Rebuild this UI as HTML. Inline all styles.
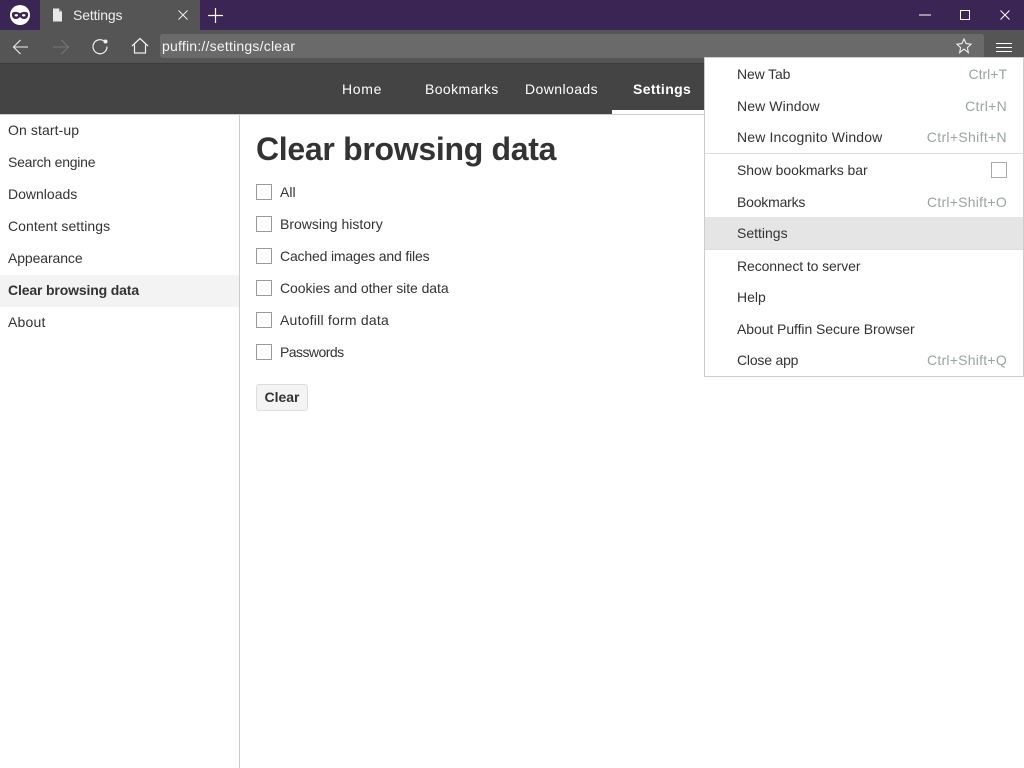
<!DOCTYPE html>
<html><head><meta charset="utf-8"><title>Settings</title>
<style>
html,body{margin:0;padding:0;width:1024px;height:768px;overflow:hidden;background:#fff}
body{position:relative;font-family:"Liberation Sans",sans-serif;font-size:14px;color:#333}
.a{position:absolute;white-space:nowrap}
.t{position:absolute;white-space:nowrap;line-height:20px;height:20px}
.cb{position:absolute;width:14px;height:14px;border:1px solid #999;background:#fff}
.w{color:#fff}
.s{color:#9aa59f;text-align:right;right:17px}
svg{position:absolute;overflow:visible}
</style></head><body>
<div class="a" style="left:0;top:0;width:1024px;height:30px;background:#3a2554"></div>
<div class="a" style="left:40px;top:0;width:160px;height:30px;background:#555"></div>
<div class="a" style="left:0;top:30px;width:1024px;height:34px;background:#555"></div>
<div class="a" style="left:0;top:63px;width:1024px;height:1px;background:#3a3a3a"></div>
<div class="a" style="left:0;top:64px;width:1024px;height:50px;background:#444"></div>
<div class="a" style="left:0;top:114px;width:1024px;height:1px;background:#ccc"></div>
<div class="a" style="left:612px;top:110px;width:92px;height:4px;background:#fff"></div>
<div class="a" style="left:160px;top:34px;width:824px;height:24px;background:#6a6a6a;border-radius:3px"></div>

<svg style="left:0;top:0" width="40" height="30"><circle cx="20" cy="15" r="10" fill="#fff"/><path d="M12 13c2.200-1.500 5.500-1.500 8 .3c2.500-1.800 5.800-1.800 8-.3c.5 3.500-1 6-3.800 6c-2 0-3.200-1-4.200-2c-1 1-2.200 2-4.200 2c-2.800 0-4.300-2.500-3.800-6z" fill="#3a2554"/><ellipse cx="16.300" cy="15.300" rx="1.700" ry="1.200" fill="#fff"/><ellipse cx="23.700" cy="15.300" rx="1.700" ry="1.200" fill="#fff"/></svg>
<svg style="left:52px;top:8px" width="11" height="14"><path d="M1 0.500h6l3 3v10h-9z" fill="#e8e8e8"/><path d="M7 0.500v3h3" fill="#888"/></svg>
<div class="t w" style="left:73px;top:5px;color:#eee;letter-spacing:-.15px">Settings</div>
<svg style="left:178px;top:10px" width="10" height="10"><path d="M.5 .5l9 9M9.500 .5l-9 9" stroke="#eee" stroke-width="1" fill="none"/></svg>
<svg style="left:208px;top:8px" width="15" height="15"><path d="M7.500 0v15M0 7.500h15" stroke="#fff" stroke-width="1.200" fill="none"/></svg>
<svg style="left:919px;top:14px" width="12" height="2"><path d="M0 1h12" stroke="#fff" stroke-width="1"/></svg>
<svg style="left:960px;top:10px" width="10" height="10"><rect x=".5" y=".5" width="9" height="9" fill="none" stroke="#fff"/></svg>
<svg style="left:1000px;top:10px" width="10" height="10"><path d="M.5 .5l9 9M9.500 .5l-9 9" stroke="#fff" stroke-width="1" fill="none"/></svg>

<svg style="left:12px;top:38.500px" width="18" height="16"><path d="M16 8H1.500M8.500 1L1.500 8l7 7" stroke="#eee" stroke-width="1.100" fill="none"/></svg>
<svg style="left:52px;top:38.500px" width="18" height="16"><path d="M1 8h15.500M9.500 1l7 7-7 7" stroke="#767676" stroke-width="1.100" fill="none"/></svg>
<svg style="left:91px;top:38px" width="17" height="16"><path d="M14 3.800A7 7 0 1 0 16 8.500" stroke="#eee" stroke-width="1.200" fill="none"/><circle cx="14.500" cy="3.500" r="2" fill="#eee"/></svg>
<svg style="left:131px;top:37px" width="18" height="17"><path d="M1 9L9 1.500l8 7.500M3.500 7.500V16h11V7.500" stroke="#eee" stroke-width="1.200" fill="none"/></svg>
<div class="t w" style="left:162px;top:36px;color:#f4f4f4;letter-spacing:.22px">puffin://settings/clear</div>
<svg style="left:956px;top:38px" width="16" height="15"><path d="M8 1l2.100 4.600 5 .6-3.700 3.400 1 5L8 11.100 3.600 14.600l1-5L.9 6.200l5-.6z" stroke="#eee" stroke-width="1.100" fill="none"/></svg>
<svg style="left:996px;top:43px" width="16" height="10"><path d="M0 .5h16M0 4.500h16M0 8.500h16" stroke="#fff" stroke-width="1" fill="none"/></svg>

<div class="t w" style="left:342px;top:79px;letter-spacing:.7px">Home</div>
<div class="t w" style="left:425px;top:79px;letter-spacing:.4px">Bookmarks</div>
<div class="t w" style="left:525px;top:79px;letter-spacing:.42px">Downloads</div>
<div class="t w" style="left:633px;top:79px;font-weight:bold;letter-spacing:.37px">Settings</div>

<div class="a" style="left:239px;top:115px;width:1px;height:653px;background:#ccc"></div>
<div class="a" style="left:0;top:275px;width:239px;height:32px;background:#f3f3f3"></div>
<div class="t" style="left:8px;top:120px;letter-spacing:.1px">On start-up</div>
<div class="t" style="left:8px;top:152px;letter-spacing:-.23px">Search engine</div>
<div class="t" style="left:8px;top:184px">Downloads</div>
<div class="t" style="left:8px;top:216px;letter-spacing:.06px">Content settings</div>
<div class="t" style="left:8px;top:248px;letter-spacing:-.1px">Appearance</div>
<div class="t" style="left:8px;top:280px;font-weight:bold;letter-spacing:-.15px">Clear browsing data</div>
<div class="t" style="left:8px;top:312px;letter-spacing:.2px">About</div>

<div class="a" style="left:256px;top:129px;font-size:32px;line-height:40px;font-weight:bold;color:#333;letter-spacing:-.3px">Clear browsing data</div>
<div class="cb" style="left:256px;top:184px"></div><div class="t" style="left:280px;top:182px">All</div>
<div class="cb" style="left:256px;top:216px"></div><div class="t" style="left:280px;top:214px">Browsing history</div>
<div class="cb" style="left:256px;top:248px"></div><div class="t" style="left:280px;top:246px;letter-spacing:-.17px">Cached images and files</div>
<div class="cb" style="left:256px;top:280px"></div><div class="t" style="left:280px;top:278px;letter-spacing:-.07px">Cookies and other site data</div>
<div class="cb" style="left:256px;top:312px"></div><div class="t" style="left:280px;top:310px;letter-spacing:.22px">Autofill form data</div>
<div class="cb" style="left:256px;top:344px"></div><div class="t" style="left:280px;top:342px;letter-spacing:-.55px">Passwords</div>
<div class="a" style="left:256px;top:384px;width:50px;height:25px;border:1px solid #ddd;border-radius:3px;background:#f4f4f4;text-align:center;line-height:25px;font-weight:bold;color:#333">Clear</div>

<div class="a" style="left:704px;top:57px;width:318px;height:318px;border:1px solid #ccc;background:#fff"></div>
<div class="a" style="left:705px;top:153px;width:318px;height:1px;background:#ddd"></div>
<div class="a" style="left:705px;top:217px;width:318px;height:33px;background:#e5e5e5;border-bottom:1px solid #ddd;box-sizing:border-box"></div>
<div class="t" style="left:737px;top:64px;letter-spacing:-.14px">New Tab</div><div class="t s" style="top:64px">Ctrl+T</div>
<div class="t" style="left:737px;top:96px;letter-spacing:.1px">New Window</div><div class="t s" style="top:96px;letter-spacing:.3px">Ctrl+N</div>
<div class="t" style="left:737px;top:127px;letter-spacing:.15px">New Incognito Window</div><div class="t s" style="top:127px;letter-spacing:.33px">Ctrl+Shift+N</div>
<div class="t" style="left:737px;top:160px;letter-spacing:-.05px">Show bookmarks bar</div>
<div class="cb" style="left:991px;top:162px;border-color:#aaa"></div>
<div class="t" style="left:737px;top:192px;letter-spacing:-.2px">Bookmarks</div><div class="t s" style="top:192px;letter-spacing:.25px">Ctrl+Shift+O</div>
<div class="t" style="left:737px;top:223px">Settings</div>
<div class="t" style="left:737px;top:256px;letter-spacing:-.1px">Reconnect to server</div>
<div class="t" style="left:737px;top:287px">Help</div>
<div class="t" style="left:737px;top:319px;letter-spacing:-.07px">About Puffin Secure Browser</div>
<div class="t" style="left:737px;top:350px;letter-spacing:-.2px">Close app</div><div class="t s" style="top:350px;letter-spacing:.25px">Ctrl+Shift+Q</div>
</body></html>
